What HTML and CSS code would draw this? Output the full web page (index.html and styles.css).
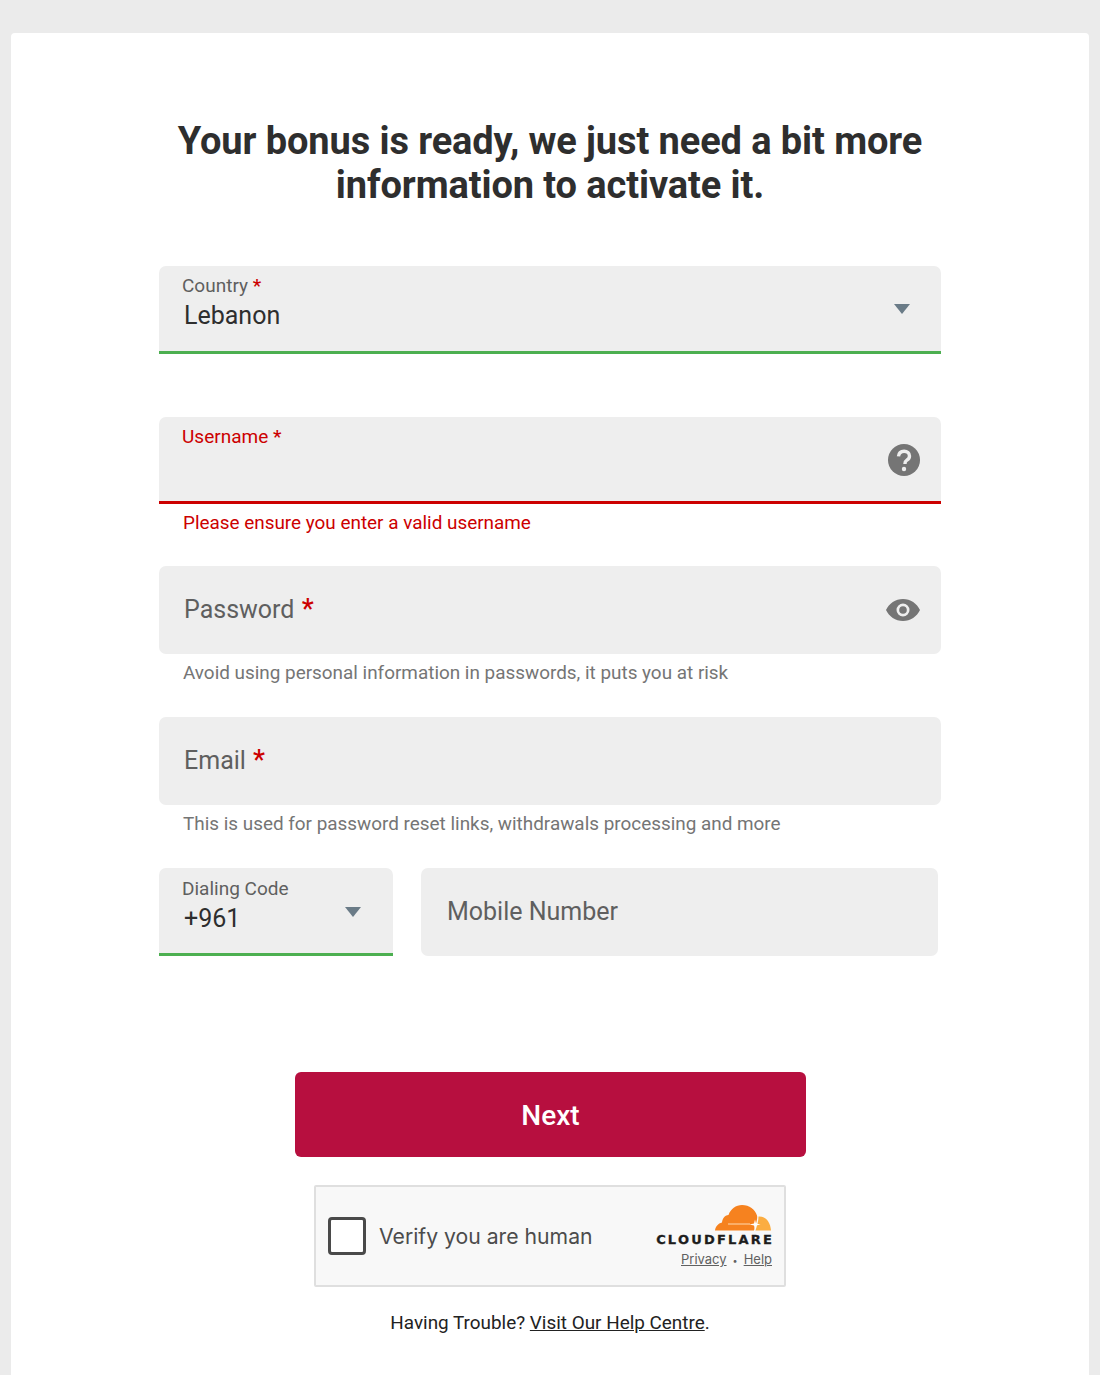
FILE: index.html
```html
<!DOCTYPE html>
<html lang="en">
<head>
<meta charset="utf-8">
<title>Your bonus is ready</title>
<link rel="stylesheet" href="styles.css">
</head>
<body>
<main class="card">
  <h1 class="title">Your bonus is ready, we just need a bit more<br>information to activate it.</h1>
  <form class="form">
    <div class="group">
      <div class="field field-ok">
        <div class="filled">
          <span class="small-label">Country <b class="req">*</b></span>
          <span class="value">Lebanon</span>
        </div>
        <svg class="caret" viewBox="0 0 16 10"><path d="M0 0h16L8 10z"/></svg>
      </div>
    </div>
    <div class="group group-short">
      <div class="field field-error">
        <div class="filled">
          <span class="small-label small-error">Username <b class="req">*</b></span>
        </div>
        <svg class="icon icon-help" viewBox="0 0 32 32"><circle cx="16" cy="16" r="16" fill="#757575"/><path d="M10.500 12.400c.3-3.200 2.500-5.200 5.600-5.200 3.100 0 5.400 1.900 5.400 4.700 0 2-1 3.200-2.600 4.300-1.400 1-1.900 1.700-1.900 3.200v.6" fill="none" stroke="#eee" stroke-width="3.400"/><circle cx="16" cy="25" r="2.200" fill="#eee"/></svg>
      </div>
      <p class="help help-error">Please ensure you enter a valid username</p>
    </div>
    <div class="group">
      <div class="field">
        <span class="placeholder">Password <b class="req req-big">*</b></span>
        <svg class="icon icon-eye" viewBox="0 0 36 24"><path fill-rule="evenodd" fill="#757575" d="M18 1C10.500 1 4 5.500 1 12c3 6.500 9.500 11 17 11s14-4.500 17-11C32 5.500 25.500 1 18 1zm0 17.500a6.500 6.500 0 1 1 0-13 6.500 6.500 0 0 1 0 13z"/><circle cx="18" cy="12" r="3.800" fill="#757575"/></svg>
      </div>
      <p class="help">Avoid using personal information in passwords, it puts you at risk</p>
    </div>
    <div class="group">
      <div class="field">
        <span class="placeholder">Email <b class="req req-big">*</b></span>
      </div>
      <p class="help">This is used for password reset links, withdrawals processing and more</p>
    </div>
    <div class="phone-row">
      <div class="field field-ok dial">
        <div class="filled">
          <span class="small-label">Dialing Code</span>
          <span class="value">+961</span>
        </div>
        <svg class="caret" viewBox="0 0 16 10"><path d="M0 0h16L8 10z"/></svg>
      </div>
      <div class="field mobile">
        <span class="placeholder">Mobile Number</span>
      </div>
    </div>
    <button class="next" type="button">Next</button>
    <div class="turnstile">
      <span class="check"></span>
      <span class="verify">Verify you are human</span>
      <div class="cf">
        <svg class="cloud" viewBox="0 0 58 28"><path fill="#f6821f" d="M1 26.500C1.500 22.500 4 19.500 8 18.500c.5-4 2.500-7 6.500-7.500C16.500 5 22 1 28 1c7.500 0 13 4.500 15 10.500 1 3-1.500 9-3 15z"/><path fill="#fbad41" d="M44.500 12.500c7-.5 12 5.500 12.500 14H41.500c1.500-5 3-9 3-14z"/><path fill="#fff" d="M41 15.500l1 4 4.500 1-4.500 1-1 4-1-4-4.500-1 4.500-1z"/><path stroke="#ffd9b0" stroke-width="1" d="M14 20h22"/></svg>
        <span class="cf-name">CLOUDFLARE</span>
        <span class="cf-links"><a class="cf-link">Privacy</a><i class="dot">•</i><a class="cf-link">Help</a></span>
      </div>
    </div>
    <p class="trouble">Having Trouble? <a class="trouble-link">Visit Our Help Centre</a>.</p>
  </form>
</main>
</body>
</html>
```
FILE: styles.css
```css
* { box-sizing: border-box; }
html, body { margin: 0; height: 100%; overflow: hidden; }
body {
  background: #ebebeb;
  padding: 33px 11px 0;
  font-family: Roboto, "Liberation Sans", sans-serif;
}
.card {
  background: #fff;
  border-radius: 4px 4px 0 0;
  height: 1342px;
  padding: 86px 148px 0;
}
.title {
  margin: 0;
  font-size: 38px;
  line-height: 44px;
  font-weight: 700;
  color: #2e2e2e;
  text-align: center;
  letter-spacing: -0.1px;
}
.form { margin-top: 59px; }
.group { height: 151px; }
.group-short { height: 149px; }
.field {
  height: 88px;
  background: #eee;
  border-radius: 7px;
  display: flex;
  align-items: center;
  justify-content: space-between;
  padding: 0 20px 0 25px;
}
.field-ok { border-bottom: 3px solid #4caf50; border-radius: 7px 7px 0 0; }
.field-error { height: 87px; border-bottom: 3px solid #cc0000; border-radius: 7px 7px 0 0; }
.filled { display: flex; flex-direction: column; align-self: flex-start; padding-top: 9px; }
.small-label {
  font-size: 19px;
  line-height: 22px;
  color: #5f5f5f;
  margin-left: -2px;
}
.small-error { color: #cc0000; }
.req { color: #cc0000; font-weight: 500; }
.req-big { font-size: 27px; line-height: 20px; margin-left: 1px; }
.value { font-size: 25px; line-height: 34px; color: #2e2e2e; margin-top: 2px; }
.placeholder { font-size: 25px; color: #5f5f5f; margin-top: -2px; }
.caret { width: 16px; height: 10px; fill: #6a7b87; margin-right: 11px; }
.icon { width: 32px; height: 32px; margin-right: 2px; }
.icon-help { margin-top: 2px; margin-right: 1.500px; }
.icon-eye { width: 36px; height: 24px; margin-right: 0; margin-top: -1px; }
.help {
  margin: 8px 0 0 24px;
  font-size: 18.900px;
  line-height: 22px;
  color: #757575;
}
.help-error { color: #cc0000; }
.phone-row { display: flex; }
.dial { width: 234px; padding-right: 21px; flex: none; }
.dial .filled { padding-top: 10px; }
.dial .caret { margin-right: 11px; margin-top: 2px; }
.mobile { width: 517px; margin-left: 28px; padding-left: 26px; }
.next {
  display: block;
  width: 511px;
  height: 85px;
  margin: 116px 0 0 136px;
  padding-top: 2px;
  border: 0;
  border-radius: 6px;
  background: #b70f3f;
  color: #fff;
  font: 500 28px Roboto, sans-serif;
}
.turnstile {
  width: 472px;
  height: 102px;
  margin: 28px 0 0 155px;
  background: #f8f8f8;
  border: 2px solid #dfdfdf;
  border-radius: 2px;
  display: flex;
  align-items: center;
  padding: 0 12px 0 12px;
  font-family: Inter, Roboto, sans-serif;
}
.check {
  width: 38px;
  height: 38px;
  flex: none;
  background: #fff;
  border: 3px solid #4a4a4a;
  border-radius: 4px;
}
.verify { margin-left: 13px; font-size: 21.200px; color: #4c4c4c; flex: 1; white-space: nowrap; }
.cf { display: flex; flex-direction: column; align-items: flex-end; width: 118px; }
.cloud { width: 58px; height: 28px; }
.cf-name {
  font: 700 13px "DejaVu Sans", sans-serif;
  letter-spacing: 2.200px;
  margin-right: -2px;
  -webkit-text-stroke: 0.3px #1d1d1d;
  color: #1d1d1d;
  line-height: 14px;
  margin-top: 1px;
  white-space: nowrap;
}
.cf-links { font-size: 13px; color: #606060; margin-top: 5px; line-height: 14px; }
.cf-link { text-decoration: underline; }
.dot { font-style: normal; margin: 0 6px; font-size: 9px; }
.trouble {
  margin: 25px 0 0;
  text-align: center;
  font-size: 18.900px;
  line-height: 22px;
  color: #222;
}
.trouble-link { text-decoration: underline; }
```
